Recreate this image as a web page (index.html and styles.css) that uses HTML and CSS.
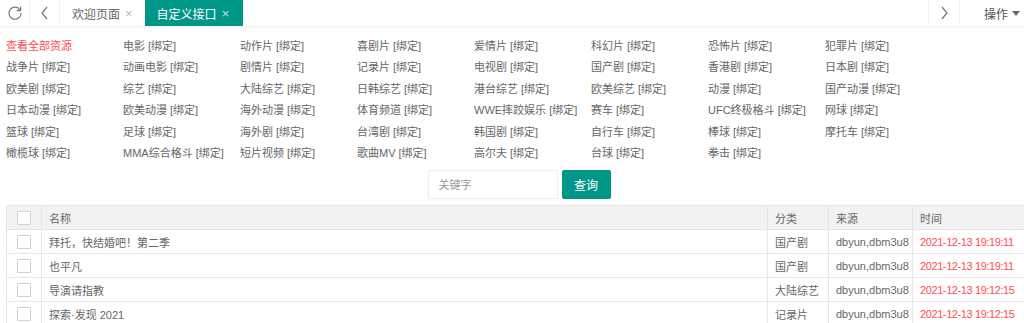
FILE: index.html
```html
<!DOCTYPE html>
<html lang="zh-CN">
<head>
    <meta charset="UTF-8">
    <title>自定义接口</title>
    <link rel="stylesheet" href="styles.css">
</head>
<body>
    <div class="tab-bar">
        <div class="tab-btn">
            <svg width="16" height="16" viewBox="0 0 16 16"><path d="M13.2 5.2A6 6 0 1 0 14 8" fill="none" stroke="#777" stroke-width="1.2"/><path d="M13.6 1.8v3.8H9.8" fill="none" stroke="#777" stroke-width="1.2"/></svg>
        </div>
        <div class="tab-btn">
            <svg width="10" height="14" viewBox="0 0 10 14"><path d="M7 1L2 7l5 6" fill="none" stroke="#777" stroke-width="1.2"/></svg>
        </div>
        <div class="tabs">
            <div class="tab">欢迎页面 <span class="close">×</span></div>
            <div class="tab active">自定义接口 <span class="close">×</span></div>
        </div>
        <div class="tab-btn right">
            <svg width="10" height="14" viewBox="0 0 10 14"><path d="M3 1l5 6-5 6" fill="none" stroke="#777" stroke-width="1.2"/></svg>
        </div>
        <div class="tab-menu">操作 <span class="caret"></span></div>
    </div>

    <div class="main">
        <div class="type-grid">
            <a class="all">查看全部资源</a>
            <a>电影 [绑定]</a>
            <a>动作片 [绑定]</a>
            <a>喜剧片 [绑定]</a>
            <a>爱情片 [绑定]</a>
            <a>科幻片 [绑定]</a>
            <a>恐怖片 [绑定]</a>
            <a>犯罪片 [绑定]</a>
            <a>战争片 [绑定]</a>
            <a>动画电影 [绑定]</a>
            <a>剧情片 [绑定]</a>
            <a>记录片 [绑定]</a>
            <a>电视剧 [绑定]</a>
            <a>国产剧 [绑定]</a>
            <a>香港剧 [绑定]</a>
            <a>日本剧 [绑定]</a>
            <a>欧美剧 [绑定]</a>
            <a>综艺 [绑定]</a>
            <a>大陆综艺 [绑定]</a>
            <a>日韩综艺 [绑定]</a>
            <a>港台综艺 [绑定]</a>
            <a>欧美综艺 [绑定]</a>
            <a>动漫 [绑定]</a>
            <a>国产动漫 [绑定]</a>
            <a>日本动漫 [绑定]</a>
            <a>欧美动漫 [绑定]</a>
            <a>海外动漫 [绑定]</a>
            <a>体育频道 [绑定]</a>
            <a>WWE摔跤娱乐 [绑定]</a>
            <a>赛车 [绑定]</a>
            <a>UFC终极格斗 [绑定]</a>
            <a>网球 [绑定]</a>
            <a>篮球 [绑定]</a>
            <a>足球 [绑定]</a>
            <a>海外剧 [绑定]</a>
            <a>台湾剧 [绑定]</a>
            <a>韩国剧 [绑定]</a>
            <a>自行车 [绑定]</a>
            <a>棒球 [绑定]</a>
            <a>摩托车 [绑定]</a>
            <a>橄榄球 [绑定]</a>
            <a>MMA综合格斗 [绑定]</a>
            <a>短片视频 [绑定]</a>
            <a>歌曲MV [绑定]</a>
            <a>高尔夫 [绑定]</a>
            <a>台球 [绑定]</a>
            <a>拳击 [绑定]</a>
        </div>

        <form class="search">
            <input type="text" placeholder="关键字">
            <button type="button">查询</button>
        </form>

        <table class="data-table">
            <thead>
                <tr>
                    <th class="col-check"><span class="checkbox"></span></th>
                    <th class="col-name">名称</th>
                    <th class="col-type">分类</th>
                    <th class="col-from">来源</th>
                    <th>时间</th>
                </tr>
            </thead>
            <tbody>
                <tr>
                    <td class="col-check"><span class="checkbox"></span></td>
                    <td>拜托，快结婚吧！第二季</td>
                    <td>国产剧</td>
                    <td>dbyun,dbm3u8</td>
                    <td class="time">2021-12-13 19:19:11</td>
                </tr>
                <tr>
                    <td class="col-check"><span class="checkbox"></span></td>
                    <td>也平凡</td>
                    <td>国产剧</td>
                    <td>dbyun,dbm3u8</td>
                    <td class="time">2021-12-13 19:19:11</td>
                </tr>
                <tr>
                    <td class="col-check"><span class="checkbox"></span></td>
                    <td>导演请指教</td>
                    <td>大陆综艺</td>
                    <td>dbyun,dbm3u8</td>
                    <td class="time">2021-12-13 19:12:15</td>
                </tr>
                <tr>
                    <td class="col-check"><span class="checkbox"></span></td>
                    <td>探索·发现 2021</td>
                    <td>记录片</td>
                    <td>dbyun,dbm3u8</td>
                    <td class="time">2021-12-13 19:12:15</td>
                </tr>
            </tbody>
        </table>
    </div>
</body>
</html>
```

FILE: styles.css
```css
body {
    margin: 0;
    font-family: "Liberation Sans", "Noto Sans CJK SC", sans-serif;
    font-size: 11px;
    color: #666;
    background: #fff;
    overflow: hidden;
}

.tab-bar {
    display: flex;
    height: 26px;
    border-bottom: 1px solid #f0f0f0;
    box-shadow: 0 1px 2px rgba(0, 0, 0, 0.04);
}

.tab-btn {
    width: 29px;
    display: flex;
    align-items: center;
    justify-content: center;
    border-right: 1px solid #f2f2f2;
}

.tab-btn.right {
    border-right: none;
    border-left: 1px solid #f2f2f2;
    width: 30px;
}

.tabs {
    flex: 1;
    display: flex;
}

.tab {
    display: flex;
    align-items: center;
    padding: 0 12px;
    font-size: 12px;
    color: #666;
}

.tab .close {
    margin-left: 5px;
    color: #bbb;
    font-size: 13px;
}

.tab.active {
    background: #009688;
    color: #fff;
    padding: 0 14px 0 12px;
}

.tab.active .close {
    color: #cde8e5;
}

.tab-menu {
    width: 65px;
    border-left: 1px solid #f2f2f2;
    display: flex;
    align-items: center;
    justify-content: flex-end;
    padding-right: 4px;
    box-sizing: border-box;
    font-size: 12px;
    color: #555;
}

.caret {
    display: inline-block;
    margin-left: 4px;
    border-left: 4px solid transparent;
    border-right: 4px solid transparent;
    border-top: 5px solid #666;
}

.main {
    padding: 8px 0 0 6px;
}

.type-grid {
    display: grid;
    grid-template-columns: repeat(8, 117px);
    grid-auto-rows: 21.4px;
    line-height: 22px;
}

.type-grid a {
    color: #666;
    white-space: nowrap;
}

.type-grid a.all {
    color: #ff4d4f;
}

.search {
    display: flex;
    justify-content: center;
    gap: 4px;
    margin: 7px 0 0;
    padding-left: 8px;
}

.search input {
    width: 130px;
    height: 29px;
    box-sizing: border-box;
    border: 1px solid #eee;
    padding: 0 10px;
    font-family: inherit;
    font-size: 11px;
    color: #666;
    outline: none;
}

.search input::placeholder {
    color: #999;
}

.search button {
    width: 49px;
    height: 29px;
    border: none;
    border-radius: 2px;
    background: #009688;
    color: #fff;
    font-family: inherit;
    font-size: 12px;
}

.data-table {
    margin-top: 6px;
    width: 1030px;
    border-collapse: collapse;
    table-layout: fixed;
}

.data-table th,
.data-table td {
    height: 23px;
    border: 1px solid #e6e6e6;
    padding: 0 7px;
    text-align: left;
    font-weight: normal;
    white-space: nowrap;
    color: #666;
}

.data-table thead tr {
    background: #f2f2f2;
}

.col-check {
    width: 20px;
}

.col-name {
    width: 711px;
}

.col-type {
    width: 46px;
}

.col-from {
    width: 69px;
}

.checkbox {
    display: block;
    width: 12px;
    height: 12px;
    margin: 0 auto;
    border: 1px solid #d2d2d2;
    background: #fff;
    border-radius: 1px;
}

.data-table td.time {
    color: #ff4d4f;
    letter-spacing: -0.4px;
}
```
